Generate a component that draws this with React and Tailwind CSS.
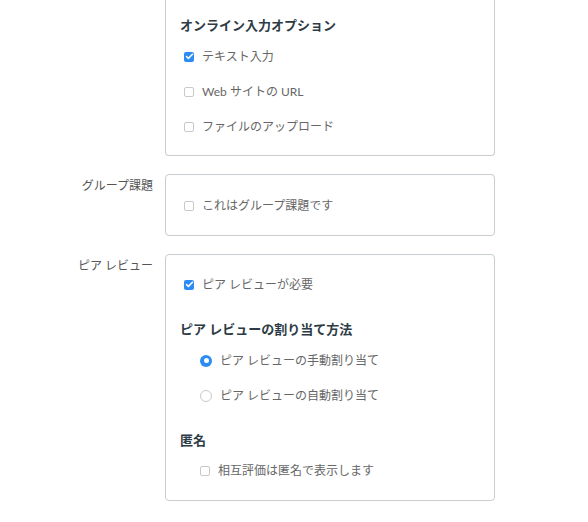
import { Check } from 'lucide-react';

const font = { fontFamily: 'Lato, "Noto Sans CJK JP", sans-serif' };

function Checkbox({ checked, label, indent }) {
  return (
    <div className={`flex h-[35px] items-center ${indent ? 'pl-[20px]' : 'pl-[4px]'}`}>
      {checked ? (
        <span className="flex h-[10px] w-[10px] items-center justify-center rounded-[2px] bg-[#2c8cf4]">
          <Check size={9} strokeWidth={4} className="text-white" />
        </span>
      ) : (
        <span className="h-[10px] w-[10px] rounded-[2px] border border-[#c9c9c9] bg-white" />
      )}
      <span className="ml-[8px] text-[12px] leading-[18px] text-[#666]">{label}</span>
    </div>
  );
}

function Radio({ checked, label }) {
  return (
    <div className="flex h-[35px] items-center pl-[20px]">
      {checked ? (
        <span className="flex h-[12px] w-[12px] items-center justify-center rounded-full bg-[#2c8cf4]">
          <span className="h-[5px] w-[5px] rounded-full bg-white" />
        </span>
      ) : (
        <span className="h-[12px] w-[12px] rounded-full border border-[#c9c9c9] bg-white" />
      )}
      <span className="ml-[8px] text-[12px] leading-[18px] text-[#666]">{label}</span>
    </div>
  );
}

function Heading({ children, className = '' }) {
  return <h4 className={`text-[13px] font-bold leading-[18px] text-[#2d3b45] ${className}`}>{children}</h4>;
}

function Row({ label, children, className = '' }) {
  return (
    <div className={`flex gap-[12px] ${className}`}>
      <div className="w-[153px] shrink-0 pt-[3px] text-right text-[12px] leading-[18px] text-[#555]">{label}</div>
      {children}
    </div>
  );
}

export default function App() {
  return (
    <div className="min-h-[522px] w-[588px] bg-white" style={font}>
      <Row label="">
        <div className="w-[330px] rounded-b-[4px] border border-t-0 border-[#c7cdd1] px-[14px] pb-[11px] pt-[16px]">
          <Heading>オンライン入力オプション</Heading>
          <div className="mt-[5px]">
            <Checkbox checked label="テキスト入力" />
            <Checkbox label="Web サイトの URL" />
            <Checkbox label="ファイルのアップロード" />
          </div>
        </div>
      </Row>

      <Row label="グループ課題" className="mt-[18px]">
        <div className="w-[330px] rounded-[4px] border border-[#c7cdd1] px-[14px] pb-[12px] pt-[13px]">
          <Checkbox label="これはグループ課題です" />
        </div>
      </Row>

      <Row label="ピア レビュー" className="mt-[18px]">
        <div className="w-[330px] rounded-[4px] border border-[#c7cdd1] px-[14px] pb-[12px] pt-[12px]">
          <Checkbox checked label="ピア レビューが必要" />
          <Heading className="mt-[18px]">ピア レビューの割り当て方法</Heading>
          <div className="mt-[5px]">
            <Radio checked label="ピア レビューの手動割り当て" />
            <Radio label="ピア レビューの自動割り当て" />
          </div>
          <Heading className="mt-[18px]">匿名</Heading>
          <div className="mt-[4px]">
            <Checkbox indent label="相互評価は匿名で表示します" />
          </div>
        </div>
      </Row>
    </div>
  );
}
